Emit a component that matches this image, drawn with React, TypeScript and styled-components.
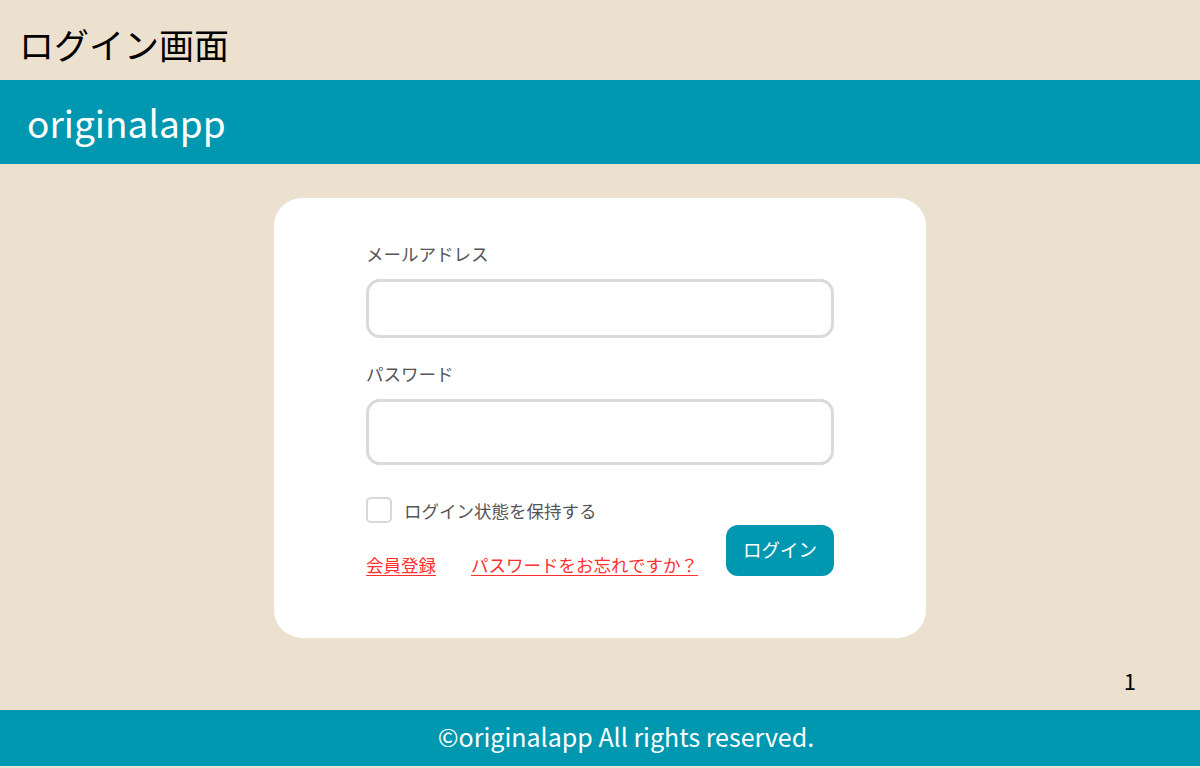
import React from "react";
import styled, { createGlobalStyle } from "styled-components";

const TEAL = "#0098b0";
const BEIGE = "#ece0cf";

const Global = createGlobalStyle`
  html, body { margin: 0; padding: 0; background: ${BEIGE}; }
  body { font-family: "Noto Sans CJK JP", "Noto Sans", sans-serif; }
  * { box-sizing: border-box; }
`;

const Page = styled.div`
  display: flex;
  flex-direction: column;
  min-height: 768px;
`;

const TitleBar = styled.div`
  height: 80px;
  display: flex;
  align-items: center;
  padding-left: 19px;
  padding-top: 6px;
  font-size: 35px;
  color: #000;
`;

const Header = styled.header`
  height: 84px;
  background: ${TEAL};
  display: flex;
  align-items: center;
  padding-left: 27px;
  color: #fff;
  font-size: 37px;
`;

const Main = styled.main`
  display: flex;
  flex-direction: column;
  align-items: center;
  padding-top: 34px;
`;

const Card = styled.div`
  width: 652px;
  background: #fff;
  border-radius: 28px;
  padding: 43px 92px 62px;
  display: flex;
  flex-direction: column;
`;

const Label = styled.label<{ $mt?: number }>`
  font-size: 17.5px;
  color: #555;
  line-height: 26px;
  margin-top: ${(p) => p.$mt ?? 0}px;
`;

const Input = styled.input<{ $h: number }>`
  width: 468px;
  height: ${(p) => p.$h}px;
  border: 3px solid #dadada;
  border-radius: 14px;
  margin-top: 12px;
  outline: none;
  background: #fff;
`;

const CheckRow = styled.label`
  display: flex;
  align-items: center;
  gap: 12px;
  margin-top: 32px;
  font-size: 17.5px;
  color: #555;
`;

const Box = styled.span`
  width: 26px;
  height: 26px;
  border: 2px solid #d8d8d8;
  border-radius: 5px;
  display: inline-block;
`;

const ActionRow = styled.div`
  display: flex;
  justify-content: space-between;
  align-items: flex-end;
  margin-top: 2px;
`;

const Links = styled.div`
  display: flex;
  gap: 35px;
`;

const Link = styled.a`
  color: #ff3030;
  font-size: 17.5px;
  text-decoration: underline;
  text-underline-offset: 3px;
  line-height: 22px;
`;

const Button = styled.button`
  width: 108px;
  height: 51px;
  border: none;
  border-radius: 12px;
  background: ${TEAL};
  color: #fff;
  font-family: inherit;
  font-size: 18.5px;
  padding-bottom: 4px;
`;

const PageNum = styled.div`
  align-self: stretch;
  display: flex;
  justify-content: flex-end;
  padding-right: 64px;
  margin-top: 26px;
  font-size: 22px;
  color: #000;
  height: 45px;
`;

const Footer = styled.footer`
  margin-top: auto;
  height: 56px;
  background: ${TEAL};
  color: #fff;
  font-size: 25px;
  display: flex;
  align-items: center;
  justify-content: center;
  padding-left: 52px;
  padding-bottom: 5px;
  margin-bottom: 2px;
`;

export default function App() {
  return (
    <Page>
      <Global />
      <TitleBar>ログイン画面</TitleBar>
      <Header>originalapp</Header>
      <Main>
        <Card>
          <Label>メールアドレス</Label>
          <Input $h={59} type="email" />
          <Label $mt={23}>パスワード</Label>
          <Input $h={66} type="password" />
          <CheckRow>
            <Box />
            ログイン状態を保持する
          </CheckRow>
          <ActionRow>
            <Links>
              <Link href="#">会員登録</Link>
              <Link href="#">パスワードをお忘れですか？</Link>
            </Links>
            <Button>ログイン</Button>
          </ActionRow>
        </Card>
        <PageNum>1</PageNum>
      </Main>
      <Footer>©originalapp All rights reserved.</Footer>
    </Page>
  );
}
